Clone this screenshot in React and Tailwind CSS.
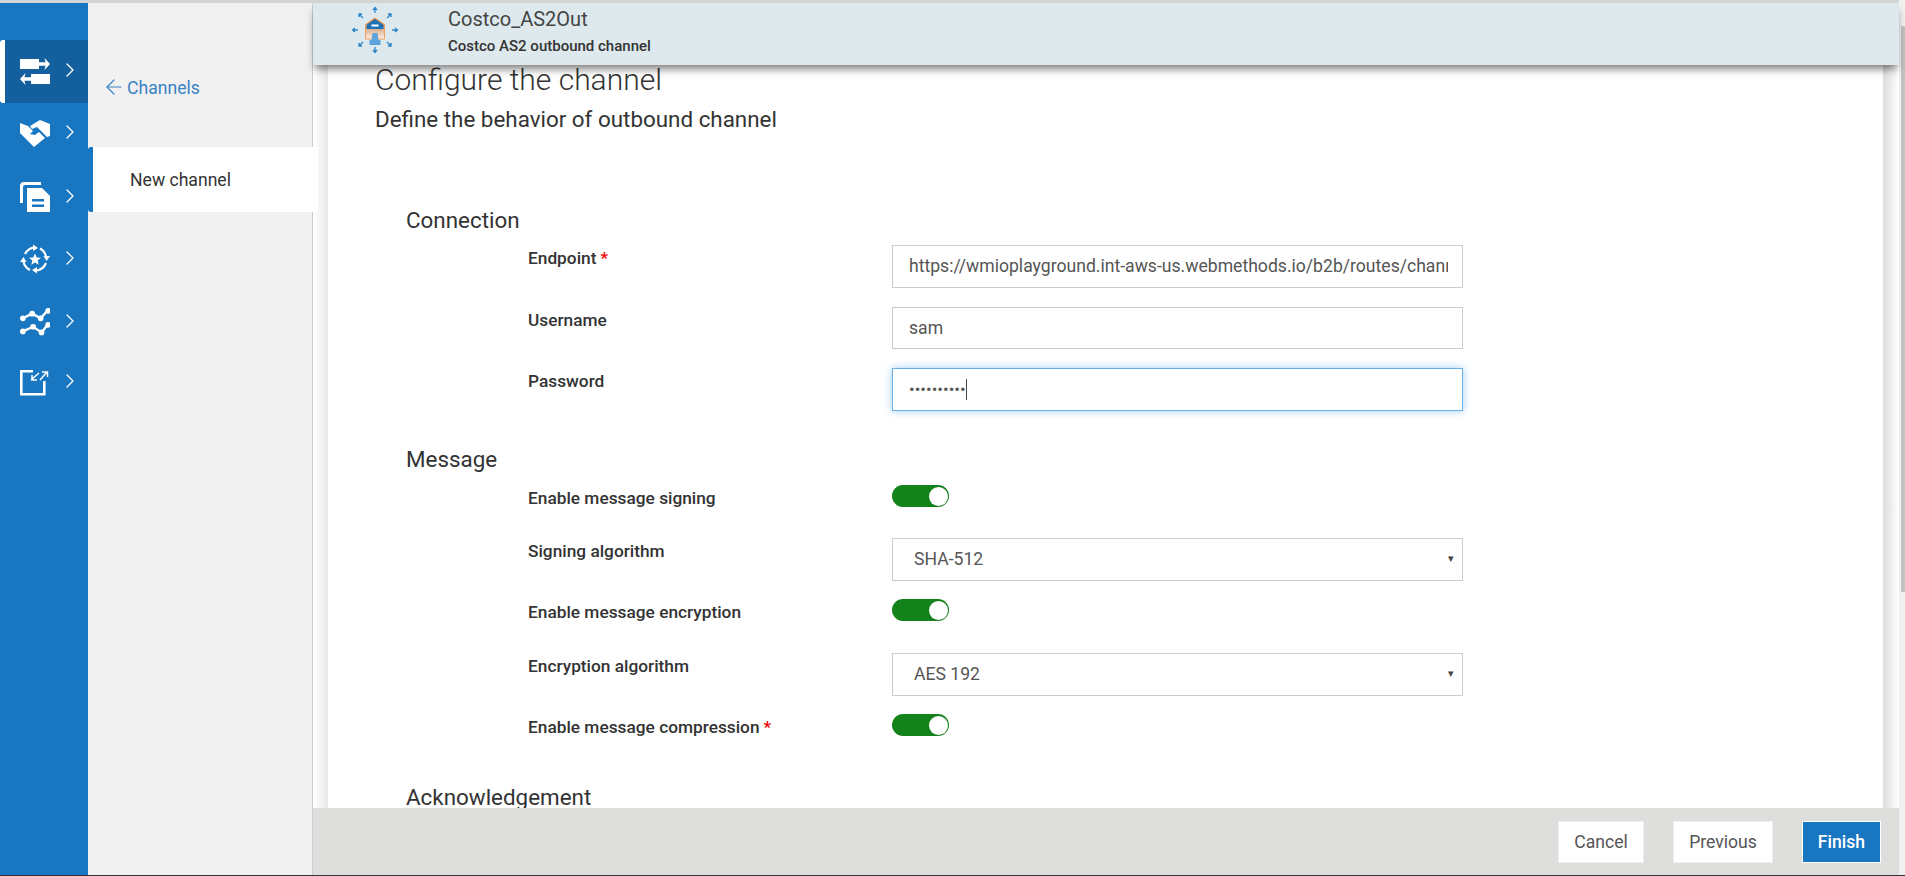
import React from 'react';
import { ChevronRight, ArrowLeft } from 'lucide-react';

function ChannelsIcon() {
  return (
    <svg width="30" height="27" viewBox="0 0 30 27" fill="white">
      <path d="M0 1h19v3.200h6.500L24.500 0 30 6l-5.500 6 1-4.200H19V11H0z" />
      <path d="M30 16H11v3.200H4.500L5.500 15 0 21l5.500 6-1-4.200H11V26h19z" />
    </svg>
  );
}

function HandshakeIcon() {
  return (
    <svg width="30" height="27" viewBox="0 0 30 27" fill="white">
      <path d="M0 3l8 3 5 5-3 3 5 1 4-3 6 6-11 9L0 13z" />
      <path d="M10 6l10-6 10 4v12l-3 1-10-10-5 2z" />
    </svg>
  );
}

function DocsIcon() {
  return (
    <svg width="30" height="30" viewBox="0 0 30 30" fill="white">
      <path d="M0 21V4q0-4 4-4h17v3H5q-2 0-2 2v16z" />
      <path fillRule="evenodd" d="M7 6h15l8 8v16H7zM12 17v2.500h12V17zM12 22.500v2.500h12v-2.500z" />
    </svg>
  );
}

function CycleStarIcon() {
  return (
    <svg width="30" height="30" viewBox="0 0 30 30" fill="none" stroke="white" strokeWidth="2.200">
      <path d="M5 10a12 12 0 0 1 9-6.500" />
      <path d="M20 4.500a12 12 0 0 1 6 8" />
      <path d="M26 19a12 12 0 0 1-10 7.500" />
      <path d="M10 26a12 12 0 0 1-6.500-8" />
      <path fill="white" stroke="none" d="M13 .5l5 3.500-5 3zM30 12l-3.500 5-3-5zM17 29.500l-5-3.500 5-3zM0 18l3.500-5 3 5z" />
      <path fill="white" stroke="none" d="M15 9.500l1.700 3.900 4.200.4-3.200 2.800 1 4.100-3.700-2.200-3.700 2.200 1-4.100-3.200-2.800 4.200-.4z" />
    </svg>
  );
}

function MetricsIcon() {
  return (
    <svg width="30" height="30" viewBox="0 0 32 32" fill="white" stroke="white" strokeWidth="2.500">
      <path fill="none" d="M3 11l10-5 9 5 8-9" />
      <path fill="none" d="M3 25l11-5 9 6 7-9" />
      <circle cx="3" cy="11" r="1.800" /><circle cx="13" cy="6" r="1.800" /><circle cx="22" cy="11" r="1.800" /><circle cx="30" cy="3" r="1.800" />
      <circle cx="3" cy="25" r="1.800" /><circle cx="14" cy="20" r="1.800" /><circle cx="23" cy="26" r="1.800" /><circle cx="30" cy="18" r="1.800" />
    </svg>
  );
}

function ExportIcon() {
  return (
    <svg width="30" height="26" viewBox="0 0 30 26" fill="none" stroke="white" strokeWidth="2">
      <path strokeWidth="2.600" d="M13 1.300H1.300v23h23V11" />
      <path strokeWidth="1.500" d="M19 3l-8 7M12 5v5h5M20 10l7-8M22 2h5.500v5" />
    </svg>
  );
}

function ChannelLogo() {
  const blue = '#2f86c9';
  return (
    <svg width="48" height="48" viewBox="0 0 48 48">
      <defs>
        <linearGradient id="house" x1="0" y1="0" x2="0" y2="1">
          <stop offset="0" stopColor="#b9642a" />
          <stop offset="1" stopColor="#fdf1e6" />
        </linearGradient>
      </defs>
      <g stroke={blue} strokeWidth="1.300" fill={blue}>
        <path d="M24 7V2M22 4l2-2.500 2 2.500" />
        <path d="M24 41v5M22 44l2 2.500 2-2.500" />
        <path d="M7 24H2M4 22l-2.500 2 2.500 2" />
        <path d="M41 24h5M44 22l2.500 2-2.500 2" />
        <path d="M12 12L8 8M8 11V8h3" />
        <path d="M36 12l4-4M37 8h3v3" />
        <path d="M12 36l-4 4M8 37v3h3" />
        <path d="M36 36l4 4M40 37v3h-3" />
      </g>
      <path d="M24 12l9.500 6.500V33h-19V18.500z" fill="url(#house)" stroke="#f0a060" strokeWidth="1" />
      <path d="M24 13l8.500 6v4h-17v-4z" fill="#1f72b8" />
      <rect x="20.500" y="18.500" width="7" height="2" fill="white" />
      <path d="M21.500 27h5l1 7h2v5h-11v-5h2z" fill="#5da3dc" />
    </svg>
  );
}

// row heights keep each icon on the reference's centre line
const navItems = [
  { icon: <ChannelsIcon />, active: true, h: 'h-[63px]' },
  { icon: <HandshakeIcon />, h: 'h-[60px]' },
  { icon: <DocsIcon />, h: 'h-[68px]' },
  { icon: <CycleStarIcon />, h: 'h-[56px]' },
  { icon: <MetricsIcon />, h: 'h-[71px]' },
  { icon: <ExportIcon />, h: 'h-[49px]' },
];

function NavItem({ item }) {
  return (
    <div className={`flex items-center ${item.h} ${item.active ? 'rounded-l-[3px] border-l-[5px] border-white bg-[#14609f] pl-[15px]' : 'pl-[20px]'}`}>
      <div className="flex w-[30px] justify-center">{item.icon}</div>
      <ChevronRight className="-mt-[3px] ml-[8px] h-[24px] w-[24px] text-white" strokeWidth={1.300} />
    </div>
  );
}

function Field({ label, required, children, top = 'pt-[3px]' }) {
  return (
    <div className="flex">
      <div className={`w-[364px] text-[17.300px] leading-[20px] font-medium text-[#333] ${top}`}>
        {label}
        {required && <span className="ml-[4px] text-[#e00]">*</span>}
      </div>
      {children}
    </div>
  );
}

function Toggle() {
  return (
    <div className="flex h-[22px] w-[57px] items-center justify-end rounded-full bg-[#14821a] pr-[1.500px]">
      <div className="h-[19px] w-[19px] rounded-full bg-white" />
    </div>
  );
}

function Select({ value }) {
  return (
    <div className="flex h-[43px] w-[571px] items-center justify-between border border-[#ccc] bg-white pr-[8px] pl-[21px] text-[17.600px] text-[#555]">
      <span>{value}</span>
      <span className="text-[11px] text-[#444]">▾</span>
    </div>
  );
}

function Button({ children, className }) {
  return (
    <div className={`flex h-[42px] items-center justify-center border pt-px text-[17.600px] ${className}`}>{children}</div>
  );
}

export default function App() {
  return (
    <div className="flex h-[876px] w-[1905px] flex-col overflow-hidden bg-white font-['Roboto',sans-serif] text-[#333]">
      <div className="flex min-h-0 flex-1">
        <div className="flex w-[1899px] shrink-0 flex-col">
          <div className="h-[3px] shrink-0 bg-[#d4d4d4]" />
          <div className="flex min-h-0 flex-1">
            {/* icon rail */}
            <div className="w-[88px] shrink-0 bg-[#1976c0] pt-[37px]">
              {navItems.map((item, i) => <NavItem key={i} item={item} />)}
            </div>

            {/* secondary nav */}
            <div className="w-[225px] shrink-0 border-r border-[#ccc] bg-[#f1f1f1]">
              <div className="flex h-[144px] items-start gap-[1px] pt-[75px] pl-[14px] text-[17.600px] leading-[20px] text-[#3b82c4]">
                <ArrowLeft className="-mt-[3px] h-[24px] w-[24px]" strokeWidth={1.200} />
                Channels
              </div>
              <div className="relative z-0 flex h-[65px] w-[230px] items-center rounded-l-[3px] border-l-[5px] border-[#1976c0] bg-white pt-[2px] pl-[37px] text-[17.600px] text-[#333]">
                New channel
              </div>
            </div>

            {/* main column */}
            <div className="flex min-w-0 flex-1 flex-col">
              <div className="relative z-10 flex h-[62px] shrink-0 bg-[#dde9ed] pl-[38px] shadow-[0_6px_8px_-2px_rgba(0,0,0,0.5)]">
                <div className="pt-[3px]"><ChannelLogo /></div>
                <div className="pl-[49px]">
                  <div className="pt-[4px] text-[20px] leading-[24px] text-[#444]">Costco_AS2Out</div>
                  <div className="pt-[5px] text-[15px] leading-[20px] font-medium text-[#333]">Costco AS2 outbound channel</div>
                </div>
              </div>

              <div className="flex min-h-0 flex-1">
                <div className="w-[15px] shrink-0 bg-gradient-to-r from-white to-[#e8e8e8]" />
                <div className="min-h-0 flex-1 overflow-hidden bg-white pl-[47px]">
                  <h1 className="text-[30px] leading-[29px] font-light text-[#333]">Configure the channel</h1>
                  <p className="pt-[13px] text-[22.400px] leading-[24px] text-[#333]">Define the behavior of outbound channel</p>

                  <h2 className="pt-[77px] pl-[31px] text-[22.400px] leading-[24px]">Connection</h2>
                  <div className="flex flex-col gap-[19px] pt-[13px] pl-[153px]">
                    <Field label="Endpoint" required>
                      <div className="flex h-[43px] w-[571px] items-center overflow-hidden border border-[#ccc] pr-[14px] pl-[16px] text-[17.600px] whitespace-nowrap text-[#555]">
                        <span className="overflow-hidden">https://wmioplayground.int-aws-us.webmethods.io/b2b/routes/channels</span>
                      </div>
                    </Field>
                    <Field label="Username">
                      <div className="flex h-[42px] w-[571px] items-center border border-[#ccc] pl-[16px] text-[17.600px] text-[#555]">sam</div>
                    </Field>
                    <Field label="Password">
                      <div className="flex h-[43px] w-[571px] items-center border border-[#66afe9] pl-[16px] text-[#555] shadow-[0_0_8px_rgba(102,175,233,0.6)]">
                        <span className="text-[16.800px]">••••••••••</span>
                        <span className="h-[21px] w-px bg-[#444]" />
                      </div>
                    </Field>
                  </div>

                  <h2 className="pt-[36px] pl-[31px] text-[22.400px] leading-[24px]">Message</h2>
                  <div className="flex flex-col pt-[14px] pl-[153px]">
                    <Field label="Enable message signing" top="pt-[3px]"><Toggle /></Field>
                    <div className="h-[30px]" />
                    <Field label="Signing algorithm"><Select value="SHA-512" /></Field>
                    <div className="h-[18px]" />
                    <Field label="Enable message encryption" top="pt-[3px]"><Toggle /></Field>
                    <div className="h-[31px]" />
                    <Field label="Encryption algorithm"><Select value="AES 192" /></Field>
                    <div className="h-[18px]" />
                    <Field label="Enable message compression" required top="pt-[3px]"><Toggle /></Field>
                  </div>

                  <h2 className="pt-[48px] pl-[31px] text-[22.400px] leading-[24px]">Acknowledgement</h2>
                </div>
                <div className="w-[16px] shrink-0 bg-gradient-to-r from-[#dcdcdc] to-white" />
              </div>

              <div className="flex h-[67px] shrink-0 items-start justify-end gap-[29px] bg-[#dededc] pt-[13px] pr-[18px]">
                <Button className="w-[86px] border-[#eee] bg-white text-[#555]">Cancel</Button>
                <Button className="w-[100px] border-[#eee] bg-white text-[#555]">Previous</Button>
                <Button className="w-[79px] border-white bg-[#1976c0] font-medium text-white">Finish</Button>
              </div>
            </div>
          </div>
        </div>

        {/* page scrollbar */}
        <div className="flex-1 bg-[#f1f1f1] pt-[26px] pl-[2px]">
          <div className="h-[566px] bg-[#c1c1c1]" />
        </div>
      </div>
      <div className="h-px shrink-0 bg-[#333]" />
    </div>
  );
}
